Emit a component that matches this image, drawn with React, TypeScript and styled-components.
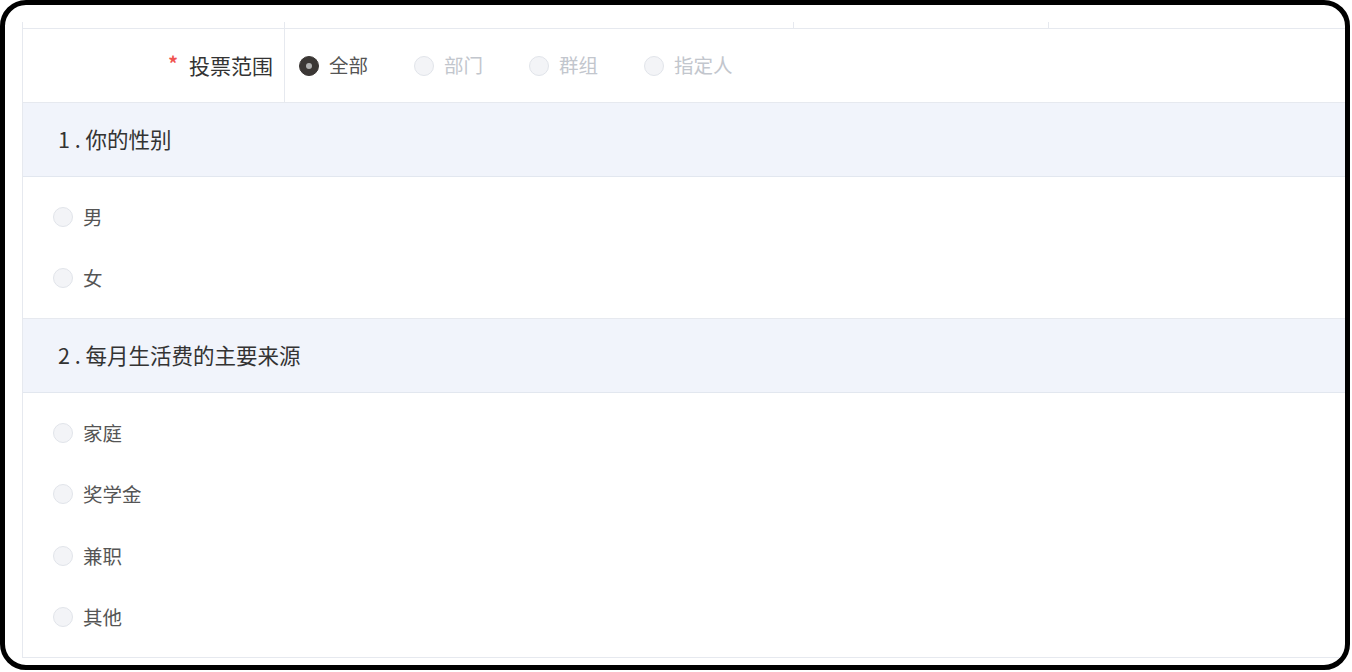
import styled, { createGlobalStyle } from "styled-components"

const GlobalStyle = createGlobalStyle`
  html, body {
    margin: 0;
    padding: 0;
    background: #fff;
  }
  body {
    font-family: "Noto Sans CJK SC", "Noto Sans", "Liberation Sans", sans-serif;
  }
`

const Frame = styled.div`
  box-sizing: border-box;
  width: 1350px;
  height: 670px;
  border: 5px solid #000;
  border-radius: 26px;
  background: #fff;
  overflow: hidden;
  padding: 17px 0 0 17px;
`

const Table = styled.div`
  width: 1400px;
  border-left: 1px solid #e6e9ef;
`

const StubRow = styled.div`
  box-sizing: border-box;
  display: flex;
  height: 7px;
  border-bottom: 1px solid #e6e9ef;
`

const StubCell = styled.div<{ $w?: number }>`
  box-sizing: border-box;
  flex: ${(p) => (p.$w ? `0 0 ${p.$w}px` : "1")};
  border-right: 1px solid #e6e9ef;
`

const ScopeRow = styled.div`
  box-sizing: border-box;
  display: flex;
  height: 74px;
  border-bottom: 1px solid #e6e9ef;
`

const LabelCell = styled.div`
  box-sizing: border-box;
  flex: 0 0 262px;
  border-right: 1px solid #e6e9ef;
  display: flex;
  align-items: center;
  justify-content: flex-end;
  padding: 0 11px 2px 0;
  font-size: 21px;
  color: #333;
`

const Required = styled.span`
  color: #f0524f;
  font-size: 19px;
  font-weight: 700;
  margin-right: 11px;
  position: relative;
  top: -2px;
`

const ScopeOptions = styled.div`
  display: flex;
  align-items: center;
  padding-left: 14px;
`

const Option = styled.label<{ $gap?: number }>`
  display: flex;
  align-items: center;
  gap: 10px;
  margin-right: ${(p) => p.$gap ?? 0}px;
`

const Radio = styled.span<{ $checked?: boolean }>`
  box-sizing: border-box;
  width: 20px;
  height: 20px;
  border-radius: 50%;
  display: inline-flex;
  align-items: center;
  justify-content: center;
  background: ${(p) => (p.$checked ? "#3b3735" : "#f3f4f7")};
  border: 1px solid ${(p) => (p.$checked ? "#3b3735" : "#e1e4ea")};
  &::after {
    content: "";
    display: ${(p) => (p.$checked ? "block" : "none")};
    width: 6px;
    height: 6px;
    border-radius: 50%;
    background: #b0b0b0;
  }
`

const OptionText = styled.span<{ $disabled?: boolean }>`
  font-size: 19.5px;
  line-height: 1;
  margin-top: -1px;
  color: ${(p) => (p.$disabled ? "#c2c6cd" : "#555")};
`

const QuestionHeader = styled.div`
  box-sizing: border-box;
  height: 74px;
  display: flex;
  align-items: center;
  padding: 0 0 2px 35px;
  background: #f1f4fb;
  border-bottom: 1px solid #e2e7ef;
  font-size: 21.5px;
  color: #333;
  white-space: pre;
`

const OptionList = styled.div`
  box-sizing: border-box;
  padding: 9px 0 9px 30px;
  border-bottom: 1px solid #e6e9ef;
`

const OptionRow = styled.div`
  height: 61.5px;
  display: flex;
  align-items: center;
`

const scopes = [
  { label: "全部", checked: true },
  { label: "部门" },
  { label: "群组" },
  { label: "指定人" },
]

const questions = [
  { title: "1 . 你的性别", options: ["男", "女"] },
  { title: "2 . 每月生活费的主要来源", options: ["家庭", "奖学金", "兼职", "其他"] },
]

const App = () => {
  return (
    <>
      <GlobalStyle />
      <Frame>
        <Table>
          <StubRow>
            <StubCell $w={262} />
            <StubCell $w={509} />
            <StubCell $w={255} />
            <StubCell />
          </StubRow>

          <ScopeRow>
            <LabelCell>
              <Required>*</Required>
              投票范围
            </LabelCell>
            <ScopeOptions>
              {scopes.map((s) => (
                <Option key={s.label} $gap={s.label.length === 2 ? 46 : 0}>
                  <Radio $checked={s.checked} />
                  <OptionText $disabled={!s.checked}>{s.label}</OptionText>
                </Option>
              ))}
            </ScopeOptions>
          </ScopeRow>

          {questions.map((q, i) => (
            <div key={i}>
              <QuestionHeader>{q.title}</QuestionHeader>
              <OptionList>
                {q.options.map((o) => (
                  <OptionRow key={o}>
                    <Option>
                      <Radio />
                      <OptionText>{o}</OptionText>
                    </Option>
                  </OptionRow>
                ))}
              </OptionList>
            </div>
          ))}
        </Table>
      </Frame>
    </>
  )
}

export default App
